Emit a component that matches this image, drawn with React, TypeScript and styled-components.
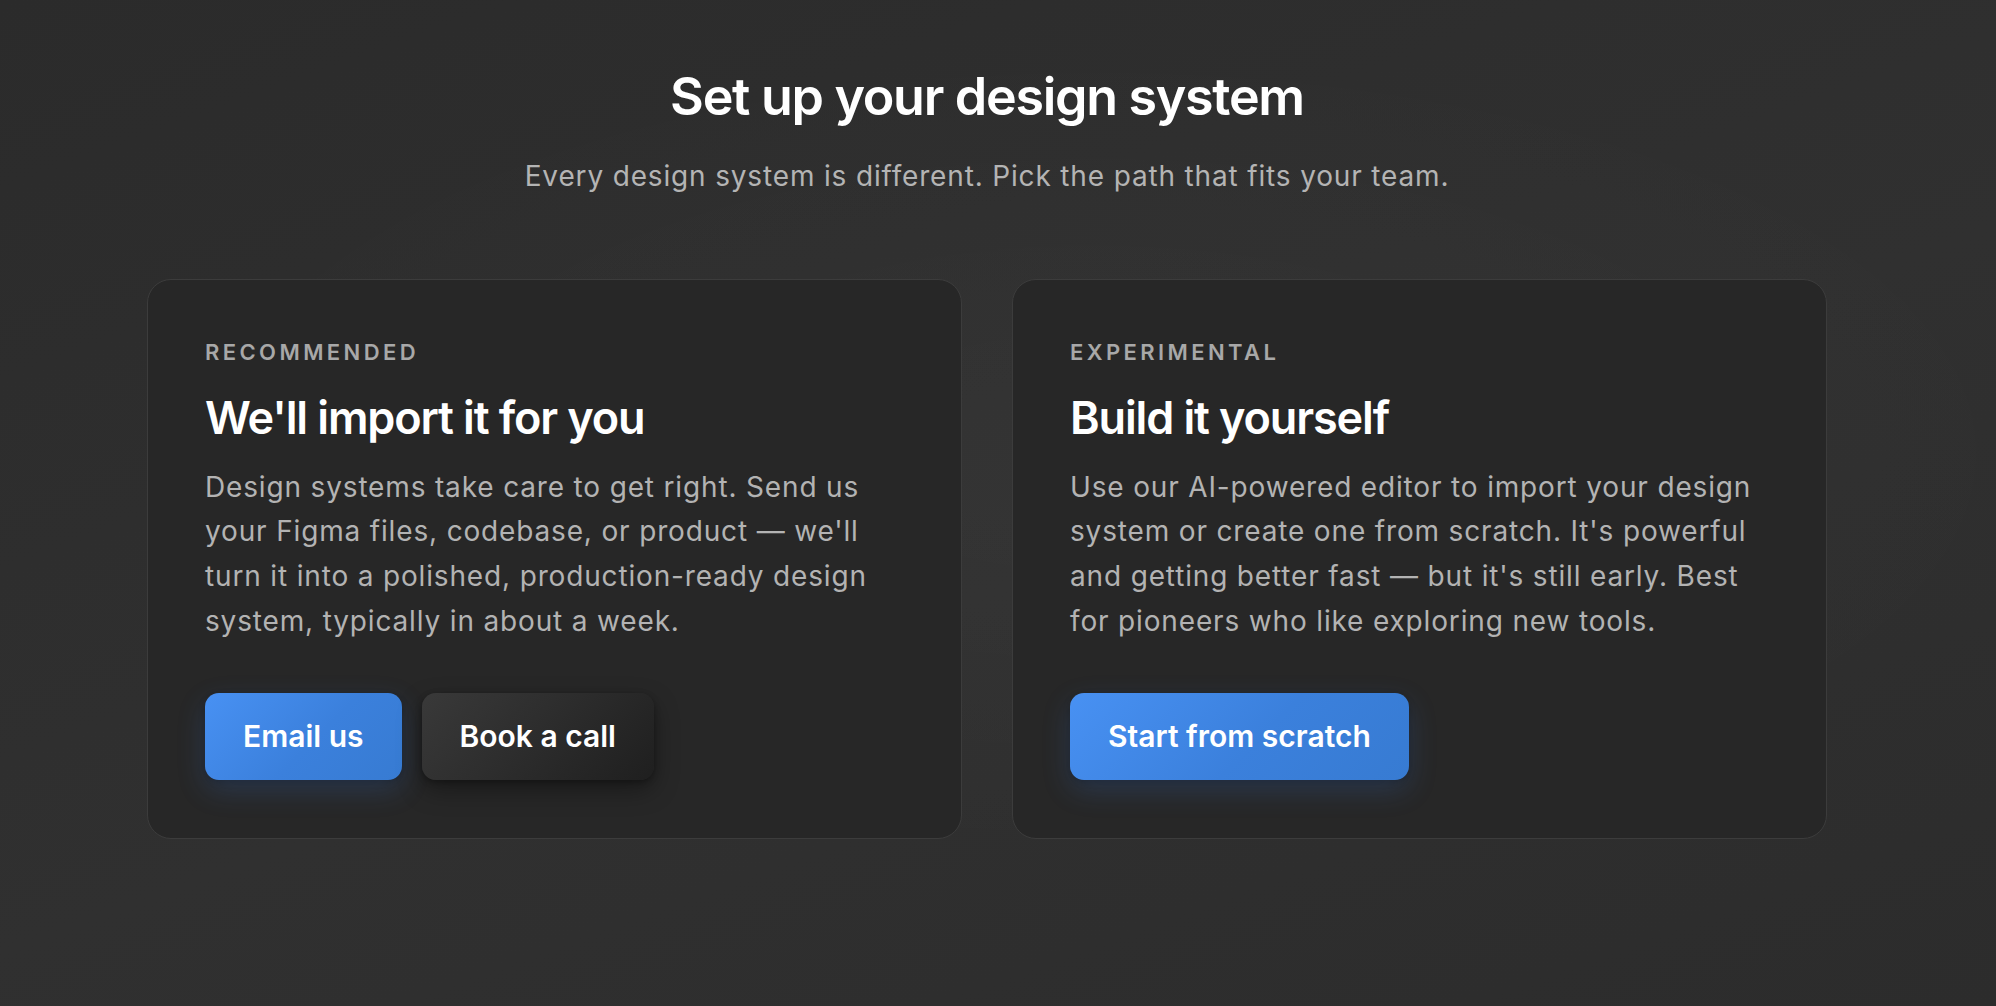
import React from "react";
import styled, { createGlobalStyle } from "styled-components";

const GlobalStyle = createGlobalStyle`
  html, body {
    margin: 0;
    padding: 0;
    background: #2d2d2d;
  }
  body {
    font-family: Inter, "Noto Sans", "Liberation Sans", sans-serif;
    -webkit-font-smoothing: antialiased;
  }
  * { box-sizing: border-box; }
`;

const Page = styled.div`
  min-height: 1006px;
  padding: 66px 22px 0 0;
  background:
    radial-gradient(ellipse 70% 60% at 55% 45%, rgba(255, 255, 255, 0.025), transparent 70%),
    linear-gradient(160deg, #2b2b2b 0%, #303030 55%, #2c2c2c 100%);
`;

const Content = styled.main`
  width: 1680px;
  margin: 0 auto;
  display: flex;
  flex-direction: column;
  align-items: center;
`;

const Title = styled.h1`
  margin: 0;
  font-size: 52px;
  line-height: 1.2;
  font-weight: 600;
  letter-spacing: -0.025em;
  color: #ffffff;
`;

const Subtitle = styled.p`
  margin: 27px 0 0;
  font-size: 28px;
  line-height: 1.5;
  font-weight: 400;
  letter-spacing: 0.03em;
  color: #b4b4b4;
`;

const Cards = styled.section`
  margin-top: 82px;
  width: 100%;
  display: grid;
  grid-template-columns: 1fr 1fr;
  gap: 50px;
`;

const Card = styled.article`
  display: flex;
  flex-direction: column;
  align-items: flex-start;
  padding: 59px 57px 58px;
  background: #272727;
  border: 1px solid #3c3c3c;
  border-radius: 24px;
`;

const Eyebrow = styled.span`
  font-size: 22px;
  line-height: 1.2;
  font-weight: 600;
  letter-spacing: 0.155em;
  text-transform: uppercase;
  color: #a8a8a8;
`;

const CardTitle = styled.h2`
  margin: 25px 0 0;
  font-size: 45px;
  line-height: 1.2;
  font-weight: 600;
  letter-spacing: -0.025em;
  color: #ffffff;
`;

const Body = styled.p`
  margin: 20px 0 0;
  font-size: 28px;
  line-height: 44.7px;
  font-weight: 400;
  letter-spacing: 0.03em;
  color: #b3b3b3;
`;

const Actions = styled.div`
  margin-top: 49px;
  display: flex;
  gap: 20px;
`;

const Button = styled.button<{ $variant: "primary" | "secondary" }>`
  height: 87px;
  padding: 0 38px;
  border: none;
  border-radius: 14px;
  font-family: inherit;
  font-size: 30px;
  font-weight: 600;
  color: #ffffff;
  cursor: pointer;
  background: ${(p) =>
    p.$variant === "primary"
      ? "linear-gradient(135deg, #4891f3 0%, #3b80dc 55%, #377bd2 100%)"
      : "linear-gradient(135deg, #393939 0%, #2b2b2b 55%, #1f1f1f 100%)"};
  box-shadow: ${(p) =>
    p.$variant === "primary"
      ? "0 10px 28px rgba(56, 120, 220, 0.22), 0 2px 6px rgba(0, 0, 0, 0.25)"
      : "0 10px 24px rgba(0, 0, 0, 0.35), 0 2px 6px rgba(0, 0, 0, 0.3)"};
`;

export default function App() {
  return (
    <>
      <GlobalStyle />
      <Page>
        <Content>
          <Title>Set up your design system</Title>
          <Subtitle>Every design system is different. Pick the path that fits your team.</Subtitle>
          <Cards>
            <Card>
              <Eyebrow>Recommended</Eyebrow>
              <CardTitle>We'll import it for you</CardTitle>
              <Body>
                Design systems take care to get right. Send us
                <br />
                your Figma files, codebase, or product — we'll
                <br />
                turn it into a polished, production-ready design
                <br />
                system, typically in about a week.
              </Body>
              <Actions>
                <Button $variant="primary">Email us</Button>
                <Button $variant="secondary">Book a call</Button>
              </Actions>
            </Card>
            <Card>
              <Eyebrow>Experimental</Eyebrow>
              <CardTitle>Build it yourself</CardTitle>
              <Body>
                Use our AI-powered editor to import your design
                <br />
                system or create one from scratch. It's powerful
                <br />
                and getting better fast — but it's still early. Best
                <br />
                for pioneers who like exploring new tools.
              </Body>
              <Actions>
                <Button $variant="primary">Start from scratch</Button>
              </Actions>
            </Card>
          </Cards>
        </Content>
      </Page>
    </>
  );
}
